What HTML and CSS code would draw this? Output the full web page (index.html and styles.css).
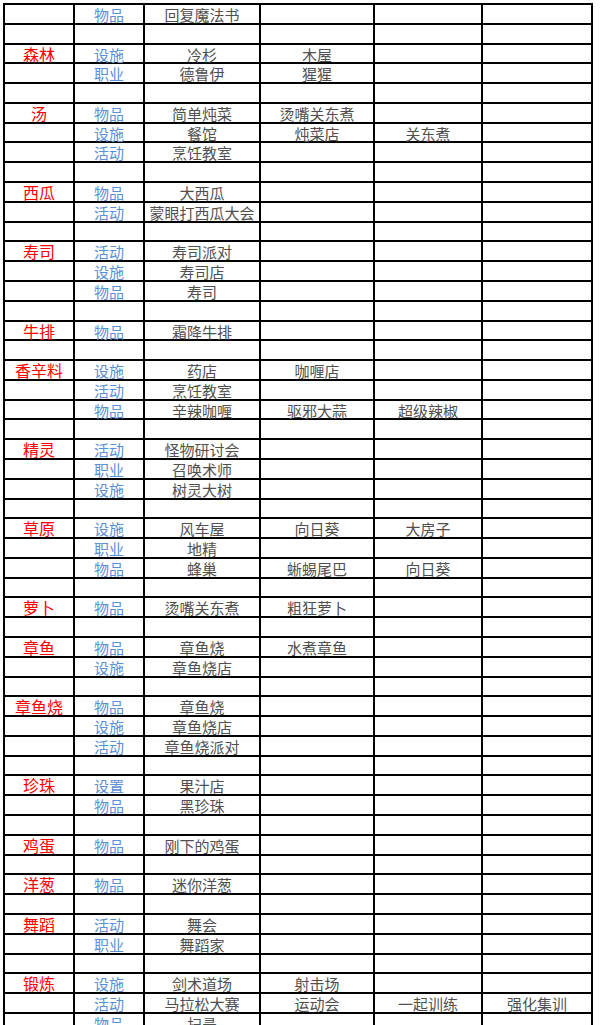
FILE: index.html
```html
<!DOCTYPE html>
<html lang="zh-CN">
<head>
<meta charset="utf-8">
<title>关键词表</title>
<link rel="stylesheet" href="styles.css">
</head>
<body>
<div class="sheet">
  <div></div><div class="c">物品</div><div class="i">回复魔法书</div><div></div><div></div><div></div>
  <div></div><div></div><div></div><div></div><div></div><div></div>
  <div class="k">森林</div><div class="c">设施</div><div class="i">冷杉</div><div class="i">木屋</div><div></div><div></div>
  <div></div><div class="c">职业</div><div class="i">德鲁伊</div><div class="i">猩猩</div><div></div><div></div>
  <div></div><div></div><div></div><div></div><div></div><div></div>
  <div class="k">汤</div><div class="c">物品</div><div class="i">简单炖菜</div><div class="i">烫嘴关东煮</div><div></div><div></div>
  <div></div><div class="c">设施</div><div class="i">餐馆</div><div class="i">炖菜店</div><div class="i">关东煮</div><div></div>
  <div></div><div class="c">活动</div><div class="i">烹饪教室</div><div></div><div></div><div></div>
  <div></div><div></div><div></div><div></div><div></div><div></div>
  <div class="k">西瓜</div><div class="c">物品</div><div class="i">大西瓜</div><div></div><div></div><div></div>
  <div></div><div class="c">活动</div><div class="i">蒙眼打西瓜大会</div><div></div><div></div><div></div>
  <div></div><div></div><div></div><div></div><div></div><div></div>
  <div class="k">寿司</div><div class="c">活动</div><div class="i">寿司派对</div><div></div><div></div><div></div>
  <div></div><div class="c">设施</div><div class="i">寿司店</div><div></div><div></div><div></div>
  <div></div><div class="c">物品</div><div class="i">寿司</div><div></div><div></div><div></div>
  <div></div><div></div><div></div><div></div><div></div><div></div>
  <div class="k">牛排</div><div class="c">物品</div><div class="i">霜降牛排</div><div></div><div></div><div></div>
  <div></div><div></div><div></div><div></div><div></div><div></div>
  <div class="k">香辛料</div><div class="c">设施</div><div class="i">药店</div><div class="i">咖喱店</div><div></div><div></div>
  <div></div><div class="c">活动</div><div class="i">烹饪教室</div><div></div><div></div><div></div>
  <div></div><div class="c">物品</div><div class="i">辛辣咖喱</div><div class="i">驱邪大蒜</div><div class="i">超级辣椒</div><div></div>
  <div></div><div></div><div></div><div></div><div></div><div></div>
  <div class="k">精灵</div><div class="c">活动</div><div class="i">怪物研讨会</div><div></div><div></div><div></div>
  <div></div><div class="c">职业</div><div class="i">召唤术师</div><div></div><div></div><div></div>
  <div></div><div class="c">设施</div><div class="i">树灵大树</div><div></div><div></div><div></div>
  <div></div><div></div><div></div><div></div><div></div><div></div>
  <div class="k">草原</div><div class="c">设施</div><div class="i">风车屋</div><div class="i">向日葵</div><div class="i">大房子</div><div></div>
  <div></div><div class="c">职业</div><div class="i">地精</div><div></div><div></div><div></div>
  <div></div><div class="c">物品</div><div class="i">蜂巢</div><div class="i">蜥蜴尾巴</div><div class="i">向日葵</div><div></div>
  <div></div><div></div><div></div><div></div><div></div><div></div>
  <div class="k">萝卜</div><div class="c">物品</div><div class="i">烫嘴关东煮</div><div class="i">粗狂萝卜</div><div></div><div></div>
  <div></div><div></div><div></div><div></div><div></div><div></div>
  <div class="k">章鱼</div><div class="c">物品</div><div class="i">章鱼烧</div><div class="i">水煮章鱼</div><div></div><div></div>
  <div></div><div class="c">设施</div><div class="i">章鱼烧店</div><div></div><div></div><div></div>
  <div></div><div></div><div></div><div></div><div></div><div></div>
  <div class="k">章鱼烧</div><div class="c">物品</div><div class="i">章鱼烧</div><div></div><div></div><div></div>
  <div></div><div class="c">设施</div><div class="i">章鱼烧店</div><div></div><div></div><div></div>
  <div></div><div class="c">活动</div><div class="i">章鱼烧派对</div><div></div><div></div><div></div>
  <div></div><div></div><div></div><div></div><div></div><div></div>
  <div class="k">珍珠</div><div class="c">设置</div><div class="i">果汁店</div><div></div><div></div><div></div>
  <div></div><div class="c">物品</div><div class="i">黑珍珠</div><div></div><div></div><div></div>
  <div></div><div></div><div></div><div></div><div></div><div></div>
  <div class="k">鸡蛋</div><div class="c">物品</div><div class="i">刚下的鸡蛋</div><div></div><div></div><div></div>
  <div></div><div></div><div></div><div></div><div></div><div></div>
  <div class="k">洋葱</div><div class="c">物品</div><div class="i">迷你洋葱</div><div></div><div></div><div></div>
  <div></div><div></div><div></div><div></div><div></div><div></div>
  <div class="k">舞蹈</div><div class="c">活动</div><div class="i">舞会</div><div></div><div></div><div></div>
  <div></div><div class="c">职业</div><div class="i">舞蹈家</div><div></div><div></div><div></div>
  <div></div><div></div><div></div><div></div><div></div><div></div>
  <div class="k">锻炼</div><div class="c">设施</div><div class="i">剑术道场</div><div class="i">射击场</div><div></div><div></div>
  <div></div><div class="c">活动</div><div class="i">马拉松大赛</div><div class="i">运动会</div><div class="i">一起训练</div><div class="i">强化集训</div>
  <div></div><div class="c">物品</div><div class="i">扫帚</div><div></div><div></div><div></div>
</div>
</body>
</html>
```
FILE: styles.css
```css
html, body {
  margin: 0;
  padding: 0;
  background: #fff;
}

body {
  font-family: "Noto Sans CJK SC", "Noto Sans", sans-serif;
}

.sheet {
  display: grid;
  grid-template-columns: 68px 68px 114px 112px 106px 108px;
  grid-auto-rows: 17.79px;
  gap: 2px;
  padding: 2px;
  background: #000;
  width: max-content;
  margin: 3px 0 0 3px;
}

.sheet > div {
  background: #fff;
  text-align: center;
  white-space: nowrap;
  overflow: visible;
  font-size: 15px;
  line-height: 17.79px;
  padding-top: 1px;
  box-sizing: border-box;
}

.k {
  color: #ff0000;
}

.sheet > .k {
  font-size: 16px;
}

.c {
  color: #5b8fd6;
}

.i {
  color: #505050;
}
```
